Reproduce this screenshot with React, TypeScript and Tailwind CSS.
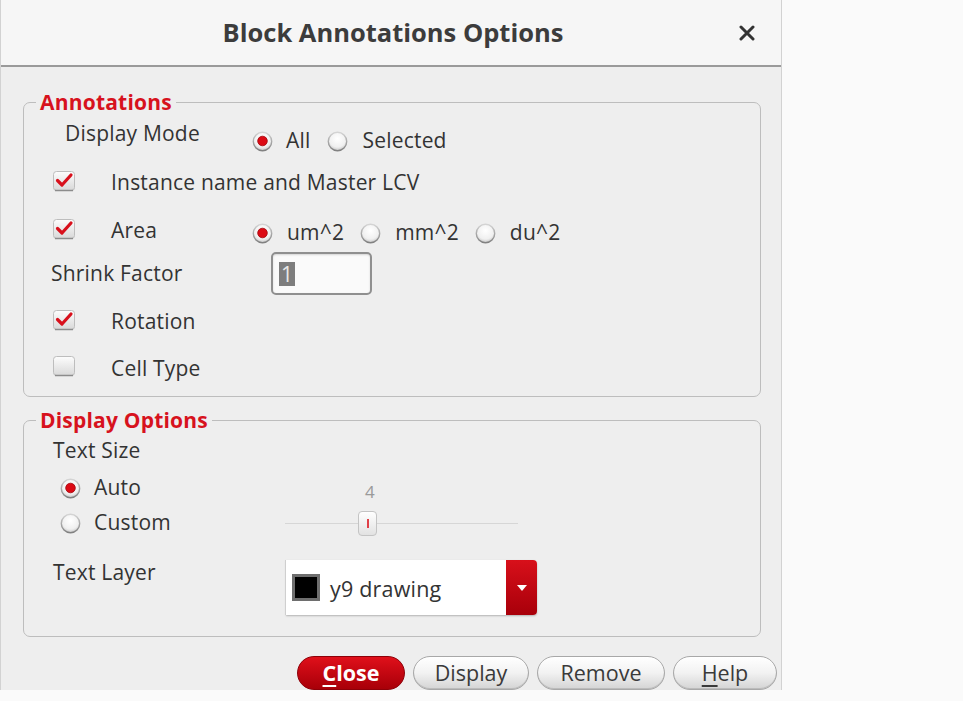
import React from "react";

const FONT = { fontFamily: '"Open Sans", "Noto Sans", sans-serif' };

function CheckBox({ checked }: { checked: boolean }) {
  return (
    <svg width="24" height="22" viewBox="0 0 24 22">
      <defs>
        <linearGradient id="cbg" x1="0" y1="0" x2="0" y2="1">
          <stop offset="0" stopColor="#fdfdfd" />
          <stop offset="1" stopColor="#d8d8d8" />
        </linearGradient>
      </defs>
      <rect x="1.5" y="1.5" width="21" height="19" rx="3" fill="url(#cbg)" stroke="#bdbdbd" />
      <line x1="3" y1="20.5" x2="21" y2="20.5" stroke="#8c8c8c" strokeWidth="1.5" />
      {checked && (
        <path d="M5.5 10.5 L10 15 L19 5" fill="none" stroke="#d8101c" strokeWidth="3.2" strokeLinecap="round" strokeLinejoin="round" />
      )}
    </svg>
  );
}

function Radio({ checked }: { checked: boolean }) {
  return (
    <svg width="21" height="21" viewBox="0 0 21 21" className="shrink-0">
      <defs>
        <radialGradient id="rg" cx="0.5" cy="0.35" r="0.65">
          <stop offset="0" stopColor="#ffffff" />
          <stop offset="0.7" stopColor="#f0f0f0" />
          <stop offset="1" stopColor="#c4c4c4" />
        </radialGradient>
        <linearGradient id="rs" x1="0" y1="0" x2="0" y2="1">
          <stop offset="0" stopColor="#d4d4d4" />
          <stop offset="1" stopColor="#808080" />
        </linearGradient>
      </defs>
      <circle cx="10.5" cy="10.5" r="9.2" fill="url(#rg)" stroke="url(#rs)" strokeWidth="1.4" />
      {checked && <circle cx="10.5" cy="10" r="4.8" fill="#dc0a14" stroke="#a0060c" strokeWidth="0.8" />}
    </svg>
  );
}

function RadioItem({ checked, label, gap = "ml-[13px]" }: { checked: boolean; label: string; gap?: string }) {
  return (
    <div className="flex items-center">
      <Radio checked={checked} />
      <span className={gap}>{label}</span>
    </div>
  );
}

function Legend({ text }: { text: string }) {
  return (
    <span className="absolute left-[12px] top-[-11px] bg-[#eeeeee] px-[4px] text-[21px] leading-[20px] font-bold text-[#d7121d]">
      {text}
    </span>
  );
}

function Btn({ children, w, primary }: { children: React.ReactNode; w: string; primary?: boolean }) {
  return (
    <div
      className={
        "flex h-[34px] items-center justify-center rounded-full text-[21.5px] " +
        w +
        (primary
          ? " border border-[#8e0008] bg-gradient-to-b from-[#e0101a] to-[#a80008] font-bold text-white"
          : " border border-[#a8a8a8] bg-gradient-to-b from-[#ffffff] via-[#f2f2f2] to-[#d4d4d4] text-[#3a3a3a] shadow-[inset_0_-1px_0_#bbbbbb]")
      }
    >
      {children}
    </div>
  );
}

export default function App() {
  return (
    <div className="h-[701px] w-[963px] bg-[#fafafa] text-[#333333]" style={FONT}>
      <div className="flex h-[690px] w-[782px] flex-col border-l border-r border-[#d2d2d2] bg-[#eeeeee]">
        {/* title bar */}
        <div className="relative flex h-[67px] shrink-0 items-center justify-center border-b-2 border-[#9a9a9a] bg-[#f6f6f6]">
          <span className="ml-[4px] text-[25.5px] font-bold text-[#3c3c3c]">Block Annotations Options</span>
          <svg className="absolute right-[26px] top-[25px]" width="16" height="16" viewBox="0 0 16 16">
            <path d="M2 2 L14 14 M14 2 L2 14" stroke="#333" strokeWidth="3" strokeLinecap="round" />
          </svg>
        </div>

        {/* Annotations group */}
        <div className="relative ml-[22px] mt-[35px] flex h-[295px] w-[738px] flex-col rounded-[7px] border border-[#bdbdbd] text-[21px] tracking-[0.2px]">
          <Legend text="Annotations" />
          <div className="mt-[19px] flex h-[30px] items-center pl-[41px]">
            <span className="w-[187px] -translate-y-[3px]">Display Mode</span>
            <div className="flex translate-y-[4px] items-center">
              <RadioItem checked label="All" />
              <div className="ml-[17px]">
                <RadioItem checked={false} label="Selected" gap="ml-[14px]" />
              </div>
            </div>
          </div>
          <div className="mt-[14px] flex h-[30px] items-center pl-[28px]">
            <div className="w-[59px]">
              <CheckBox checked />
            </div>
            <span className="translate-y-[2px]">Instance name and Master LCV</span>
          </div>
          <div className="mt-[20px] flex h-[30px] items-center pl-[28px]">
            <div className="w-[59px] -translate-y-[2px]">
              <CheckBox checked />
            </div>
            <span className="w-[141px] translate-y-[0px]">Area</span>
            <div className="flex translate-y-[2px] items-center">
              <RadioItem checked label="um^2" gap="ml-[14px]" />
              <div className="ml-[16px]">
                <RadioItem checked={false} label="mm^2" gap="ml-[14px]" />
              </div>
              <div className="ml-[16px]">
                <RadioItem checked={false} label="du^2" gap="ml-[14px]" />
              </div>
            </div>
          </div>
          <div className="mt-[6px] flex h-[43px] items-center pl-[27px]">
            <span className="w-[220px]">Shrink Factor</span>
            <div className="flex h-[43px] w-[101px] items-center rounded-[5px] border-2 border-[#8f8f8f] bg-[#fafafa] pl-[6px] shadow-[inset_0_1px_2px_rgba(0,0,0,0.15)]">
              <span className="bg-[#7d7d7d] px-[2px] leading-[24px] text-[#e8e8e8]">1</span>
            </div>
          </div>
          <div className="mt-[10px] flex h-[30px] items-center pl-[28px]">
            <div className="w-[59px]">
              <CheckBox checked />
            </div>
            <span className="translate-y-[2px]">Rotation</span>
          </div>
          <div className="mt-[16px] flex h-[30px] items-center pl-[28px]">
            <div className="w-[59px]">
              <CheckBox checked={false} />
            </div>
            <span className="translate-y-[3px]">Cell Type</span>
          </div>
        </div>

        {/* Display Options group */}
        <div className="relative ml-[22px] mt-[23px] flex h-[217px] w-[738px] flex-col rounded-[7px] border border-[#bdbdbd] text-[21px] tracking-[0.2px]">
          <Legend text="Display Options" />
          <div className="mt-[15px] flex h-[30px] items-center pl-[29px]">
            <span>Text Size</span>
          </div>
          <div className="mt-[7px] flex h-[30px] items-center pl-[36px]">
            <RadioItem checked label="Auto" gap="ml-[13px]" />
          </div>
          <div className="mt-[5px] flex h-[30px] items-center pl-[36px]">
            <div className="w-[225px]">
              <RadioItem checked={false} label="Custom" gap="ml-[13px]" />
            </div>
            <div className="relative flex h-[30px] w-[233px] items-center">
              <div className="h-[1px] w-full bg-[#d6d6d6]" />
              <span className="absolute left-[80px] top-[-29px] text-[17px] text-[#9a9a9a]">4</span>
              <div className="absolute left-[73px] top-[3px] flex h-[25px] w-[19px] items-center justify-center rounded-[4px] border border-[#c4c4c4] bg-gradient-to-b from-[#ffffff] to-[#e2e2e2]">
                <div className="h-[9px] w-[2px] bg-[#e04048]" />
              </div>
            </div>
          </div>
          <div className="mt-[22px] flex h-[55px] items-start pl-[29px]">
            <span className="mt-[-3px] w-[233px] leading-[30px]">Text Layer</span>
            <div className="flex h-[55px] w-[251px] items-stretch rounded-r-[4px] bg-white shadow-[-1px_0_0_#cfcfcf,0_1px_2px_rgba(0,0,0,0.25)]">
              <div className="flex flex-1 items-center pl-[6px]">
                <div className="h-[27px] w-[28px] border-[3px] border-[#6e6e6e] bg-black" />
                <span className="ml-[10px] translate-y-[2px] text-[21.5px] text-[#333]">y9 drawing</span>
              </div>
              <div className="flex w-[31px] items-center justify-center rounded-r-[4px] bg-gradient-to-b from-[#d8101a] to-[#a8000a]">
                <svg width="10" height="6" viewBox="0 0 10 6">
                  <path d="M0 0 L10 0 L5 6 Z" fill="#ffffff" />
                </svg>
              </div>
            </div>
          </div>
        </div>

        {/* buttons */}
        <div className="mt-[19px] flex justify-end gap-[8px] pr-[4px]">
          <Btn w="w-[108px]" primary>
            <span>
              <span className="underline underline-offset-[4px]">C</span>lose
            </span>
          </Btn>
          <Btn w="w-[116px]">Display</Btn>
          <Btn w="w-[128px]">Remove</Btn>
          <Btn w="w-[104px]">
            <span>
              <span className="underline underline-offset-[4px]">H</span>elp
            </span>
          </Btn>
        </div>
      </div>
    </div>
  );
}
